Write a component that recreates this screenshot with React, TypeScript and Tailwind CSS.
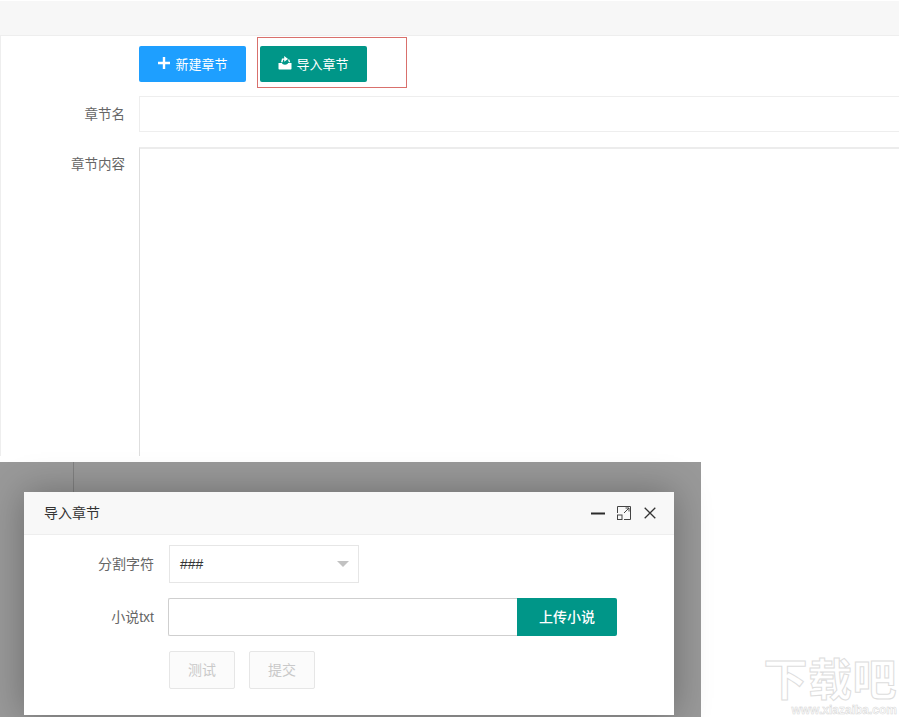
function ImportIcon() {
  return (
    <svg width="14" height="15" viewBox="0 0 14 15" fill="#fff">
      <path d="M.5 8h3.4c.4 1.1 1.5 1.7 3.1 1.7S9.700 9.100 10.100 8h3.400v5.700a.8.8 0 0 1-.8.8H1.300a.8.800 0 0 1-.8-.8V8z" />
      <path d="M3 7.300 4 3.400h2.200V1l3.900 3-3.900 2.800V4.800H5.200l-.6 2.500z" />
      <path d="M10 4.600h1.300l1 2.700h-1.500z" />
    </svg>
  );
}

function WindowButtons() {
  return (
    <div className="flex items-center gap-[12px]">
      <svg width="14" height="14" viewBox="0 0 14 14" stroke="#2b2b2b" fill="none">
        <path d="M0 7.500h14" strokeWidth="2" />
      </svg>
      <svg width="14" height="14" viewBox="0 0 14 14" stroke="#444" fill="none" strokeWidth="1">
        <path d="M.5 7V.5h13v13H7" />
        <path d="M7 7l5-5M8.500 2H12v3.500" />
        <rect x=".5" y="9" width="4.500" height="4.500" />
      </svg>
      <svg width="12" height="12" viewBox="0 0 12 12" stroke="#333" fill="none" strokeWidth="1.300" className="ml-[1px]">
        <path d="M.7.7l10.600 10.600M11.300.7.7 11.300" />
      </svg>
    </div>
  );
}

export default function App() {
  return (
    <div className="w-[899px] h-[717px] overflow-hidden bg-white font-['Liberation_Sans','Noto_Sans_CJK_SC',sans-serif] text-[14px]">
      {/* chapter form */}
      <div className="h-[462px] overflow-hidden">
        <div className="h-[36px] bg-[#f7f7f7] border-t border-white border-b border-b-[#eeeeee]" />
        <div className="border-l border-[#eeeeee] h-[420px] overflow-hidden">
          <div className="flex items-start pl-[138px] pt-[10px]">
            <button className="flex items-center justify-center gap-[4px] w-[107px] h-[36px] rounded-[2px] bg-[#1e9fff] text-white text-[13px]">
              <svg width="14" height="14" viewBox="0 0 14 14" stroke="#fff" strokeWidth="2.400" fill="none" className="mb-[2px]">
                <path d="M7 1v12M1 7h12" />
              </svg>
              <span className="pt-[2px]">新建章节</span>
            </button>
            <div className="relative ml-[14px]">
              <button className="flex items-center justify-center gap-[4px] w-[107px] h-[36px] rounded-[2px] bg-[#009688] text-white text-[13px]">
                <span className="mb-[4px]">
                  <ImportIcon />
                </span>
                <span className="pt-[2px]">导入章节</span>
              </button>
              <div className="absolute left-[-3px] top-[-9px] w-[150px] h-[51px] border border-[#d9706c]" />
            </div>
          </div>
          <div className="flex mt-[14px] h-[36px]">
            <label className="w-[124px] shrink-0 pt-[1px] text-right text-[#666] text-[13.500px] leading-[35px]">章节名</label>
            <div className="ml-[14px] grow h-[36px] border border-r-0 border-[#eeeeee]" />
          </div>
          <div className="flex mt-[15px]">
            <label className="w-[124px] shrink-0 pt-[1px] text-right text-[#666] text-[13.500px] leading-[34px]">章节内容</label>
            <div className="ml-[14px] grow h-[320px] border-t-2 border-t-[#ececec] border-l border-l-[#dedede]" />
          </div>
        </div>
      </div>

      <div className="flex h-[255px]">
        {/* dimmed layer with dialog */}
        <div className="relative w-[701px] shrink-0 bg-[#999999] pl-[24px] pt-[30px]">
          <div className="absolute left-[73px] top-0 w-[1px] h-[30px] bg-[#808080]" />
          <div className="relative w-[650px] h-[223px] bg-white shadow-[0_0_35px_rgba(0,0,0,0.3)]">
            <div className="flex items-center justify-between h-[43px] pl-[20px] pr-[18px] bg-[#f8f8f8] border-b border-[#eeeeee] text-[#333]">
              <span>导入章节</span>
              <WindowButtons />
            </div>
            <div className="flex mt-[10px]">
              <label className="w-[130px] shrink-0 text-right text-[#666] leading-[38px]">分割字符</label>
              <div className="ml-[15px] w-[190px] h-[38px] pl-[10px] pr-[10px] flex items-center justify-between border border-[#e6e6e6] text-[#333]">
                <span>###</span>
                <span className="w-0 h-0 border-x-[6px] border-x-transparent border-t-[6px] border-t-[#c2c2c2] mr-[-1px]" />
              </div>
            </div>
            <div className="flex mt-[15px]">
              <label className="w-[130px] shrink-0 text-right text-[#666] leading-[38px]">小说txt</label>
              <div className="ml-[14px] w-[349px] h-[38px] border border-r-0 border-[#cfcfcf] rounded-l-[2px]" />
              <button className="w-[100px] h-[38px] bg-[#009688] text-white font-medium rounded-r-[2px]">上传小说</button>
            </div>
            <div className="flex gap-[14px] ml-[145px] mt-[15px]">
              <button className="w-[66px] h-[38px] border border-[#e6e6e6] bg-[#fbfbfb] text-[#c9c9c9] rounded-[2px]">测试</button>
              <button className="w-[66px] h-[38px] border border-[#e6e6e6] bg-[#fbfbfb] text-[#c9c9c9] rounded-[2px]">提交</button>
            </div>
          </div>
        </div>

        {/* site watermark */}
        <div className="grow flex flex-col items-end pr-[2px] pt-[197px]">
          <div className="text-[44px] leading-[44px] font-bold tracking-[0.5px] text-white [-webkit-text-stroke:1px_#dddddd] whitespace-nowrap">下载吧</div>
          <div className="mt-[1px] text-[12px] leading-[12px] font-bold text-white [-webkit-text-stroke:0.5px_#d5d5d5] whitespace-nowrap">www.xiazaiba.com</div>
        </div>
      </div>
    </div>
  );
}
